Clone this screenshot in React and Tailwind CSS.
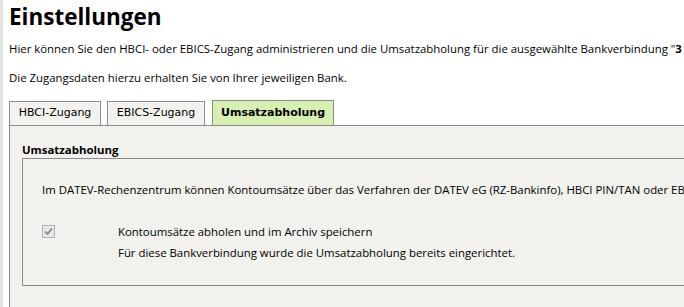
export default function App() {
  const body = { fontFamily: '"Open Sans", "Noto Sans", sans-serif' };
  const tabFont = { fontFamily: '"DejaVu Sans", Verdana, sans-serif' };

  return (
    <div className="flex h-[307px] w-[684px] overflow-hidden bg-white text-black" style={body}>
      <div className="w-[3px] shrink-0 bg-[#e3e3e3]" />
      <div className="flex min-w-0 flex-1 flex-col overflow-hidden pl-[6px]">
        <h1 className="mt-[1px] whitespace-nowrap text-[22.5px] font-bold leading-[32px]">Einstellungen</h1>
        <p className="mt-[8px] whitespace-nowrap text-[11.4px] leading-[16px]">
          Hier können Sie den HBCI- oder EBICS-Zugang administrieren und die Umsatzabholung für die ausgewählte Bankverbindung "<b>3</b>
        </p>
        <p className="mt-[13px] whitespace-nowrap text-[11.4px] leading-[16px]">
          Die Zugangsdaten hierzu erhalten Sie von Ihrer jeweiligen Bank.
        </p>

        <div className="mt-[14px] flex items-end text-[11px]" style={tabFont}>
          <div className="mr-[6px] flex h-[24px] w-[92px] items-center justify-center border border-b-0 border-[#8c8c8c] bg-[#f3f2ef]">
            HBCI-Zugang
          </div>
          <div className="mr-[7px] flex h-[24px] w-[98px] items-center justify-center border border-b-0 border-[#8c8c8c] bg-[#f3f2ef]">
            EBICS-Zugang
          </div>
          <div className="flex h-[25px] w-[122px] items-center justify-center border border-b-0 border-[#8c8c8c] bg-[#d6f0b2] font-bold">
            Umsatzabholung
          </div>
        </div>

        <div className="flex-1 border-l border-t border-[#8c8c8c] bg-[#f2f1ed] pl-[12px]">
          <div className="mt-[16px] whitespace-nowrap text-[11.4px] font-bold leading-[16px]">
            Umsatzabholung
          </div>
          <div className="h-[128px] border-b border-l border-t border-[#8c8c8c] pl-[19px]">
            <p className="mt-[23px] whitespace-nowrap text-[11.4px] leading-[16px]">
              Im DATEV-Rechenzentrum können Kontoumsätze über das Verfahren der DATEV eG (RZ-Bankinfo), HBCI PIN/TAN oder EBICS
            </p>
            <div className="mt-[23px] flex items-start">
              <div className="mt-[4px] flex h-[13px] w-[13px] items-center justify-center border border-[#b3b3b3] bg-[#e8e8e8]">
                <svg width="11" height="11" viewBox="0 0 11 11">
                  <path d="M2 5.5 L4.5 8 L9 2.5" fill="none" stroke="#8a8a8a" strokeWidth="1.8" />
                </svg>
              </div>
              <div className="ml-[63px] text-[11.4px] leading-[21px]">
                <div className="whitespace-nowrap">Kontoumsätze abholen und im Archiv speichern</div>
                <div className="whitespace-nowrap">Für diese Bankverbindung wurde die Umsatzabholung bereits eingerichtet.</div>
              </div>
            </div>
          </div>
        </div>
      </div>
    </div>
  );
}
